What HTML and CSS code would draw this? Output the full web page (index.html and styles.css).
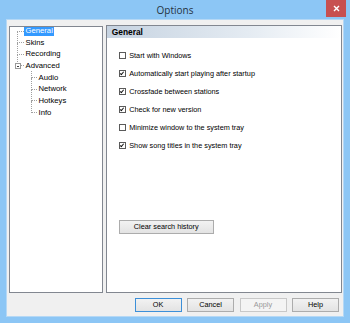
FILE: index.html
```html
<!DOCTYPE html>
<html lang="en">
<head>
<meta charset="UTF-8" />
<title>Options</title>
<link rel="stylesheet" href="styles.css">
</head>
<body>
<div class="window">
  <div class="titlebar">
    <span class="title">Options</span>
    <button class="close" aria-label="Close">
      <svg width="7" height="7" viewBox="0 0 7 7"><path d="M1 1L6 6M6 1L1 6" stroke="#fff" stroke-width="1.4" /></svg>
    </button>
  </div>

  <div class="client">
    <div class="main">
      <!-- ツリー -->
      <ul class="tree">
        <li class="root first"><span class="label selected">General</span></li>
        <li class="root"><span class="label">Skins</span></li>
        <li class="root"><span class="label">Recording</span></li>
        <li class="root"><span class="toggle"></span><span class="label">Advanced</span></li>
        <li class="child first"><span class="label">Audio</span></li>
        <li class="child"><span class="label">Network</span></li>
        <li class="child"><span class="label">Hotkeys</span></li>
        <li class="child"><span class="label">Info</span></li>
      </ul>

      <!-- 設定ページ -->
      <div class="page">
        <div class="page-header">General</div>
        <div class="options">
          <label class="check"><span class="box"></span>Start with Windows</label>
          <label class="check on"><span class="box"></span>Automatically start playing after startup</label>
          <label class="check on"><span class="box"></span>Crossfade between stations</label>
          <label class="check on"><span class="box"></span>Check for new version</label>
          <label class="check"><span class="box"></span>Minimize window to the system tray</label>
          <label class="check on"><span class="box"></span>Show song titles in the system tray</label>
        </div>
        <button class="btn clear">Clear search history</button>
      </div>
    </div>

    <div class="footer">
      <button class="btn default">OK</button>
      <button class="btn">Cancel</button>
      <button class="btn" disabled>Apply</button>
      <button class="btn">Help</button>
    </div>
  </div>
</div>
</body>
</html>
```

FILE: styles.css
```css
/* 共通 */
*, *::before, *::after {
  box-sizing: border-box;
}
body {
  margin: 0;
  width: 350px;
  height: 323px;
  overflow: hidden;
  background: #8cc6f5;
  font-family: "Liberation Sans", Arial, sans-serif;
  color: #000;
}

.window {
  display: flex;
  flex-direction: column;
  height: 323px;
}

/* タイトルバー */
.titlebar {
  position: relative;
  height: 19px;
  display: flex;
  align-items: center;
  justify-content: center;
}
.title {
  font-family: "Open Sans", "Liberation Sans", sans-serif;
  font-size: 10px;
  color: #26323e;
  margin-top: 1px;
}
.close {
  position: absolute;
  right: 4px;
  top: 0;
  width: 20px;
  height: 17px;
  border: none;
  padding: 0;
  background: #c75050;
  display: flex;
  align-items: center;
  justify-content: center;
}

/* クライアント領域 */
.client {
  flex: 1;
  margin: 0 6px 6px 6px;
  background: #f0f0f0;
  border: 1px solid #b5d8f5;
  display: flex;
  flex-direction: column;
  padding: 5px 1px 0 2px;
}
.main {
  display: flex;
  gap: 3px;
  height: 268px;
}

/* ツリー */
.tree {
  list-style: none;
  margin: 1px 0 0 0;
  padding: 0;
  width: 94px;
  height: 267px;
  background: #fff;
  border: 1px solid #828790;
  font-size: 7.7px;
  color: #000;
}
.tree li {
  position: relative;
  height: 11.67px;
  display: flex;
  align-items: flex-start;
}
.tree .label {
  line-height: 8.6px;
  padding: 0 1.5px;
}
.tree .label.selected {
  background: #3399ff;
  color: #fff;
}
.tree li.root {
  padding-left: 14px;
}
.tree li.child {
  padding-left: 27px;
}
.tree li::before {
  content: "";
  position: absolute;
  top: -7.2px;
  height: 11.67px;
  border-left: 1px dotted #a0a0a0;
  border-bottom: 1px dotted #a0a0a0;
}
.tree li.root::before {
  left: 7px;
  width: 7px;
}
.tree li.child::before {
  left: 21px;
  width: 6px;
}
.tree li.root.first::before {
  top: 4px;
  height: 0.5px;
  border-left: none;
}
.tree li.child.first::before {
  top: -3px;
  height: 7.5px;
}
.toggle {
  position: absolute;
  left: 5px;
  top: 1.5px;
  width: 6px;
  height: 6px;
  background: #fff;
  border: 1px solid #9a9a9a;
  z-index: 1;
}
.toggle::after {
  content: "";
  position: absolute;
  left: 1px;
  top: 1.5px;
  width: 2px;
  height: 1px;
  background: #404040;
}

/* 設定ページ */
.page {
  width: 237px;
  background: #fff;
  border: 1px solid #828790;
  display: flex;
  flex-direction: column;
  align-items: flex-start;
}
.page-header {
  align-self: stretch;
  height: 12px;
  line-height: 12px;
  padding-left: 5px;
  font-size: 8.4px;
  font-weight: bold;
  background: linear-gradient(to right, #c6d3e1, #e4ebf2 60%, #ffffff);
}
.options {
  display: flex;
  flex-direction: column;
  padding: 8px 0 0 12px;
}
.check {
  height: 18px;
  display: flex;
  align-items: center;
  gap: 3.5px;
  font-size: 7.3px;
  color: #000;
}
.box {
  position: relative;
  width: 7px;
  height: 7px;
  border: 1px solid #5a5a5a;
  background: #fff;
}
.check.on .box::after {
  content: "";
  position: absolute;
  left: 1.5px;
  top: 0px;
  width: 2px;
  height: 4px;
  border-right: 1.3px solid #111;
  border-bottom: 1.3px solid #111;
  transform: rotate(40deg);
}

/* ボタン */
.btn {
  height: 13.5px;
  padding: 0;
  font-family: "Liberation Sans", Arial, sans-serif;
  font-size: 7.3px;
  color: #000;
  background: linear-gradient(#f2f2f2, #e3e3e3);
  border: 1px solid #acacac;
}
.btn.default {
  border-color: #3c8fd8;
}
.btn:disabled {
  color: #9a9a9a;
  background: #f4f4f4;
  border-color: #c8c8c8;
}
.clear {
  margin: 66px 0 0 12px;
  width: 95px;
}

/* フッター */
.footer {
  display: flex;
  justify-content: flex-end;
  gap: 5.5px;
  padding: 5px 3px 0 0;
}
.footer .btn {
  width: 47px;
}
```
